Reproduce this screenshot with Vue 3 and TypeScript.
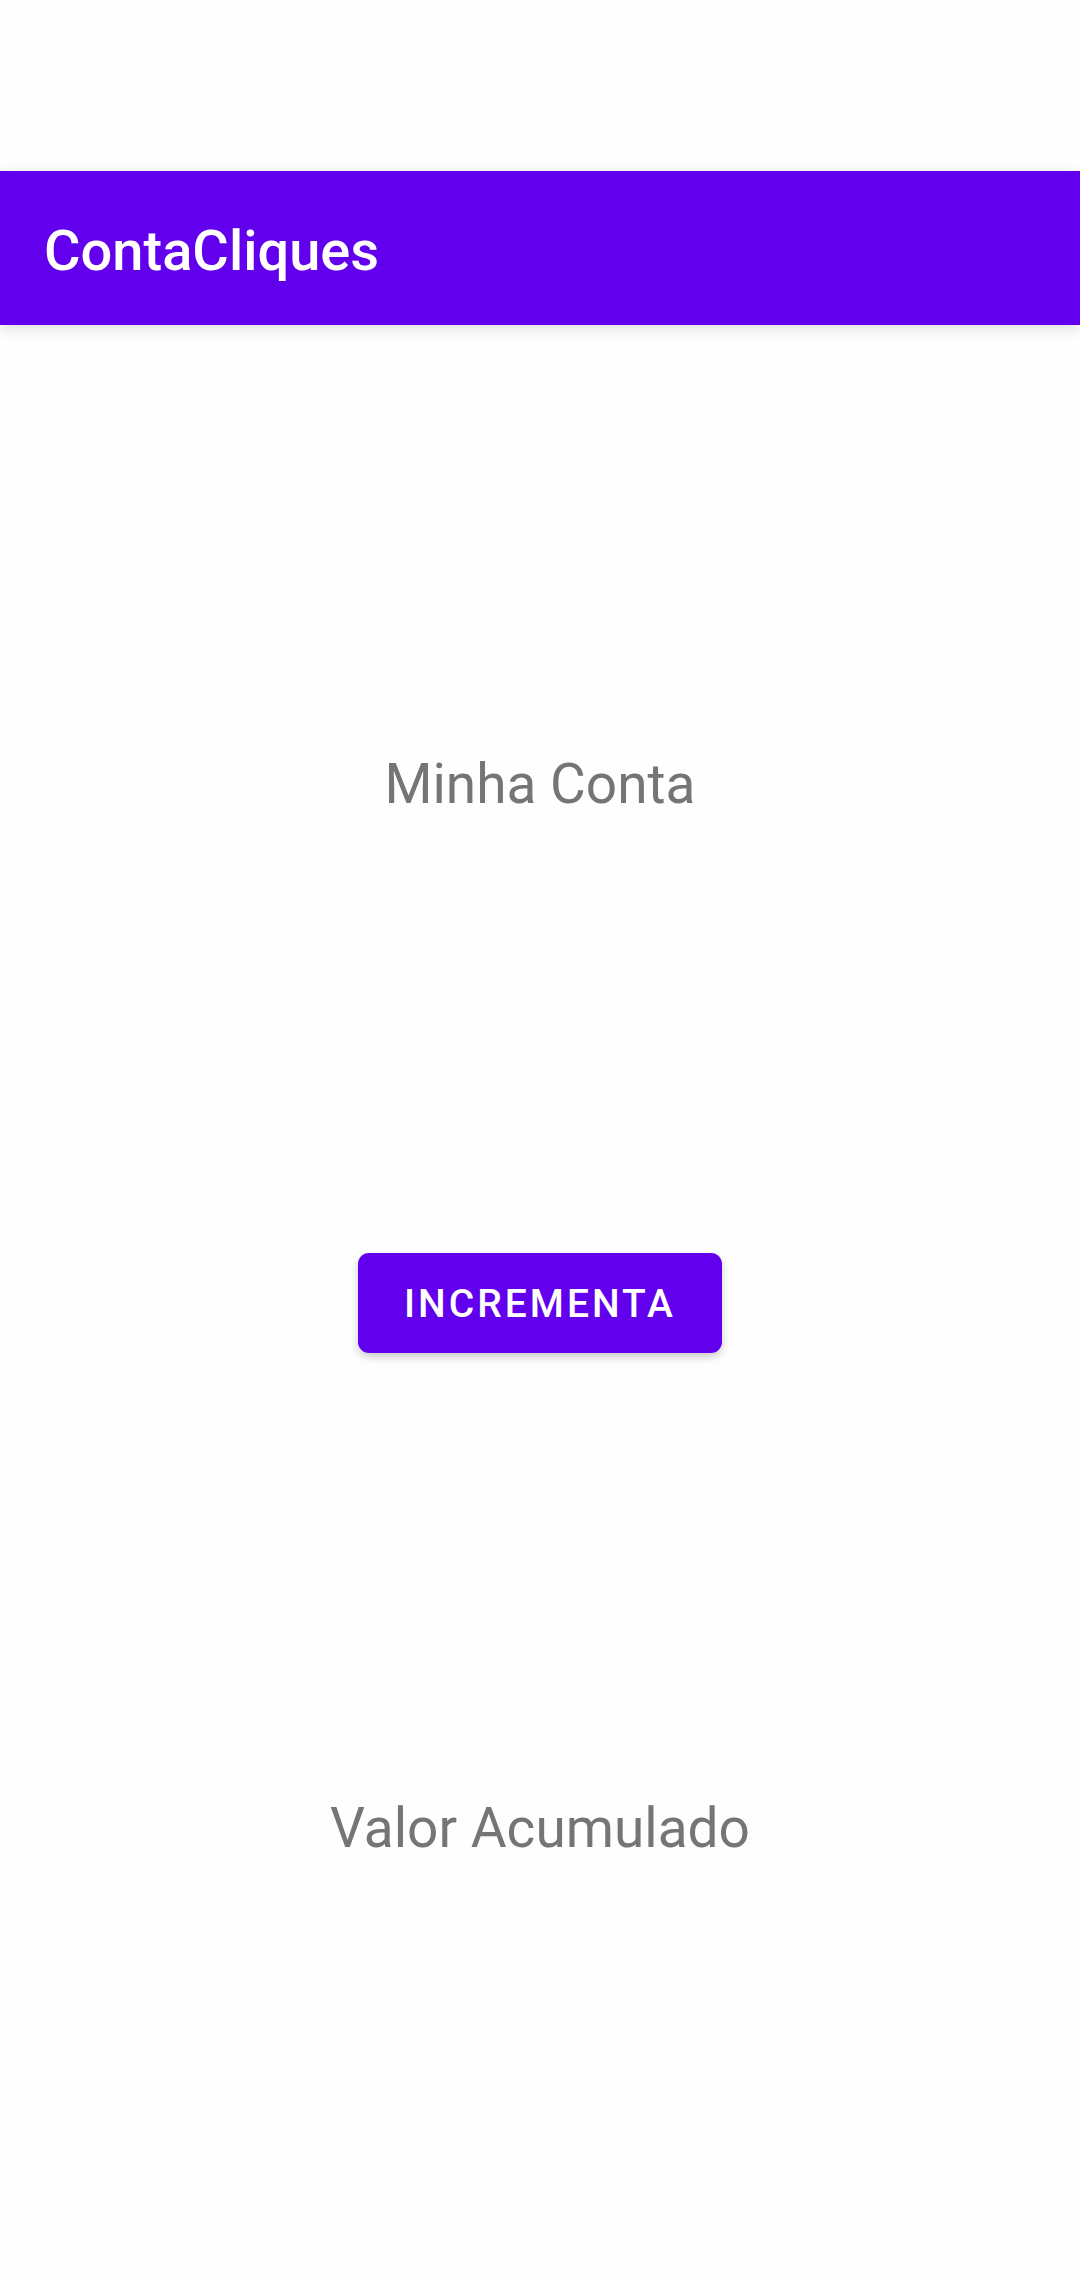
<script setup lang="ts">
import { ref } from 'vue'

const count = ref<number | null>(null)

function increment(): void {
  count.value = (count.value ?? 0) + 1
}
</script>

<template>
  <div class="screen">
    <header class="app-bar">
      <h1 class="title">ContaCliques</h1>
    </header>
    <main class="content">
      <p class="label caption">Minha Conta</p>
      <button class="action" type="button" @click="increment">INCREMENTA</button>
      <output class="label total">{{ count ?? 'Valor Acumulado' }}</output>
    </main>
  </div>
</template>

<style>
body {
  background: #fefefe;
}
</style>

<style scoped>
.screen {
  display: flex;
  flex-direction: column;
  min-height: 100vh;
  box-sizing: border-box;
  padding-top: 171px;
  overflow-x: hidden;
  font-family: Roboto, "Liberation Sans", sans-serif;
}

.app-bar {
  padding: 48px 44px 42px;
  background: #6200ee;
  box-shadow: 0 4px 14px rgba(0, 0, 0, 0.12);
}

.title {
  margin: 0;
  color: #fff;
  font-size: 56px;
  font-weight: 500;
  line-height: 64px;
}

.content {
  flex: 1;
  display: grid;
  grid-template-rows: 422fr auto 432fr auto 438fr auto 415fr;
  justify-items: center;
}

.label {
  margin: 0;
  color: #757575;
  font-size: 55px;
  line-height: 74px;
}

.caption {
  grid-row: 2;
}

.total {
  grid-row: 6;
}

.action {
  grid-row: 4;
  padding: 28px 46px 26px;
  border: 0;
  border-radius: 11px;
  background: #6200ee;
  box-shadow: 0 4px 8px rgba(0, 0, 0, 0.2);
  color: #fff;
  font-family: inherit;
  font-size: 39px;
  font-weight: 500;
  line-height: 46px;
  letter-spacing: 3px;
}
</style>
